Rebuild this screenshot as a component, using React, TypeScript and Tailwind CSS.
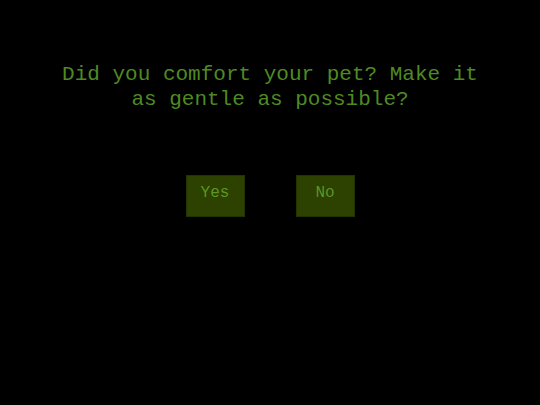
export default function App() {
  return (
    <div className="w-[540px] h-[405px] bg-black flex flex-col items-center" style={{ fontFamily: '"Liberation Mono", "Courier New", monospace' }}>
      <p className="mt-[62px] text-[21px] leading-[25px] text-[#4f8a22] text-center">
        Did you comfort your pet? Make it
        <br />
        as gentle as possible?
      </p>
      <div className="mt-[63px] flex gap-[51px]">
        <button className="w-[59px] h-[42px] bg-[#2d4100] border border-[#243400] text-[#5a9626] text-[16px] pb-[6px]">Yes</button>
        <button className="w-[59px] h-[42px] bg-[#2d4100] border border-[#243400] text-[#5a9626] text-[16px] pb-[6px]">No</button>
      </div>
    </div>
  );
}
